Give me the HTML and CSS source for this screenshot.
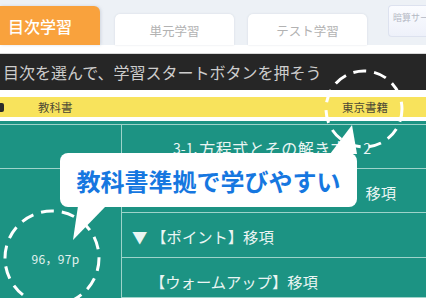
FILE: index.html
```html
<!DOCTYPE html>
<html lang="ja">
<head>
<meta charset="utf-8">
<title>目次学習</title>
<link rel="stylesheet" href="styles.css">
</head>
<body>
<div class="page">
  <nav class="tabs">
    <div class="tab tab-active">目次学習</div>
    <div class="tab tab-plain tab-2">単元学習</div>
    <div class="tab tab-plain tab-3">テスト学習</div>
    <div class="tab tab-small">暗算サーキット</div>
  </nav>
  <div class="strip"></div>
  <div class="guide">目次を選んで、学習スタートボタンを押そう</div>
  <div class="head">
    <span class="check"></span>
    <span class="h-book">教科書</span>
    <span class="h-pub">東京書籍</span>
  </div>
  <div class="table">
    <div class="cell left r1"></div>
    <div class="cell left r2"><span class="pages">96，97p</span></div>
    <div class="cell right title"><span class="num">3-1.</span><span class="kana">方程式とその解き方</span><span class="num num-2">2</span></div>
    <div class="cell right"><span class="tri">▼</span>【等式の性質を使った解き方】移項</div>
    <div class="cell right"><span class="tri">▼</span>【ポイント】移項</div>
    <div class="cell right indent r4">【ウォームアップ】移項</div>
    <div class="cell right indent"></div>
  </div>

  <svg class="overlay" width="426" height="298" viewBox="0 0 426 298">
    <polygon points="330,154 352,125 357,154" fill="#ffffff"/>
    <polygon points="78,206 73,240 106,206" fill="#ffffff"/>
    <circle cx="364" cy="109" r="38" fill="none" stroke="#ffffff" stroke-width="3" stroke-dasharray="13 8"/>
    <circle cx="52" cy="258" r="47" fill="none" stroke="#ffffff" stroke-width="3" stroke-dasharray="13 8"/>
  </svg>
  <div class="bubble">教科書準拠で学びやすい</div>
</div>
</body>
</html>
```

FILE: styles.css
```css
* { box-sizing: border-box; }
html, body { margin: 0; padding: 0; }
body {
  width: 426px;
  height: 298px;
  overflow: hidden;
  background: #ffffff;
  font-family: "Noto Sans CJK JP", "Noto Sans", sans-serif;
}
.page {
  position: relative;
  width: 426px;
  height: 298px;
  overflow: hidden;
}

/* tabs */
.tabs {
  display: flex;
  align-items: flex-end;
  height: 45px;
  background: #edf1f6;
}
.tab {
  display: flex;
  align-items: center;
  justify-content: center;
  white-space: nowrap;
  flex-shrink: 0;
}
.tab-active {
  width: 100px;
  height: 39px;
  padding-left: 8px;
  justify-content: flex-start;
  background: #f9a23d;
  color: #ffffff;
  font-size: 16px;
  font-weight: 500;
  border-radius: 0 6px 0 0;
  box-shadow: 1px 0 3px rgba(150, 160, 180, 0.35);
}
.tab-plain {
  width: 119px;
  height: 31px;
  background: #ffffff;
  color: #b2b2b2;
  font-size: 12.5px;
  border-radius: 5px 5px 0 0;
  box-shadow: 0 0 2px rgba(170, 180, 200, 0.45);
  padding-top: 1px;
}
.tab-2 { margin-left: 15px; }
.tab-3 { margin-left: 14px; }
.tab-small {
  align-self: flex-start;
  margin-top: 5px;
  margin-left: 21px;
  width: 60px;
  height: 32px;
  justify-content: flex-start;
  padding-left: 4px;
  padding-bottom: 7px;
  font-size: 9px;
  color: #b4b8c4;
  background: linear-gradient(#fbfcff, #eef1fa);
  border: 1px solid #dde2ef;
  border-right: none;
  border-radius: 4px 0 0 4px;
  overflow: hidden;
}

.strip {
  height: 9px;
  background: #ffffff;
  border-bottom: 1px solid #d8d8d8;
}
.guide {
  height: 36px;
  background: #262626;
  color: #cdcdcd;
  font-size: 16px;
  line-height: 36px;
  padding-left: 3px;
  white-space: nowrap;
  margin-bottom: 7px;
}

.head {
  display: flex;
  align-items: center;
  height: 20px;
  background: #f8e35c;
  color: #4d4a35;
  font-size: 11.5px;
  margin-bottom: 4px;
}
.check {
  width: 8px;
  height: 9px;
  margin-left: -4px;
  background: #2b2b2b;
  border-radius: 2px;
}
.h-book { margin-left: 34px; }
.h-pub { margin-left: auto; margin-right: 38px; }

/* table */
.table {
  display: grid;
  grid-template-columns: 121px 1fr;
  grid-template-rows: 44px 44px 45px 40px 45px;
  grid-auto-flow: column;
  background: #1c9383;
  padding-top: 3px;
  color: #eaf5f3;
}
.cell {
  border-top: 1px solid #9dd3ca;
  display: flex;
  align-items: center;
  white-space: nowrap;
  font-size: 15.3px;
}
.left { grid-column: 1; }
.r1 { grid-row: 1; }
.r2 {
  grid-row: 2 / 6;
  justify-content: center;
  padding-top: 5px;
  padding-right: 10px;
}
.pages { font-size: 12px; color: #e4f2ef; letter-spacing: 0.3px; }
.right {
  grid-column: 2;
  border-left: 1px solid #9dd3ca;
  padding-left: 10px;
  padding-top: 2px;
}
.tri { margin-right: 4px; }
.right.indent { padding-left: 28px; }
.right.r4 { padding-top: 7px; }
.right.title { padding-left: 51px; }
.num {
  font-size: 14px;
  letter-spacing: 0;
}
.kana {
  font-size: 16px;
  letter-spacing: 0.5px;
  margin-left: 2px;
}
.num-2 { margin-left: 16px; }

/* overlays */
.overlay {
  position: absolute;
  left: 0;
  top: 0;
  pointer-events: none;
}
.bubble {
  position: absolute;
  left: 60px;
  top: 153px;
  width: 297px;
  height: 54px;
  background: #ffffff;
  border-radius: 8px;
  color: #1677e0;
  font-size: 24px;
  font-weight: 700;
  display: flex;
  align-items: center;
  justify-content: center;
  white-space: nowrap;
}
```
